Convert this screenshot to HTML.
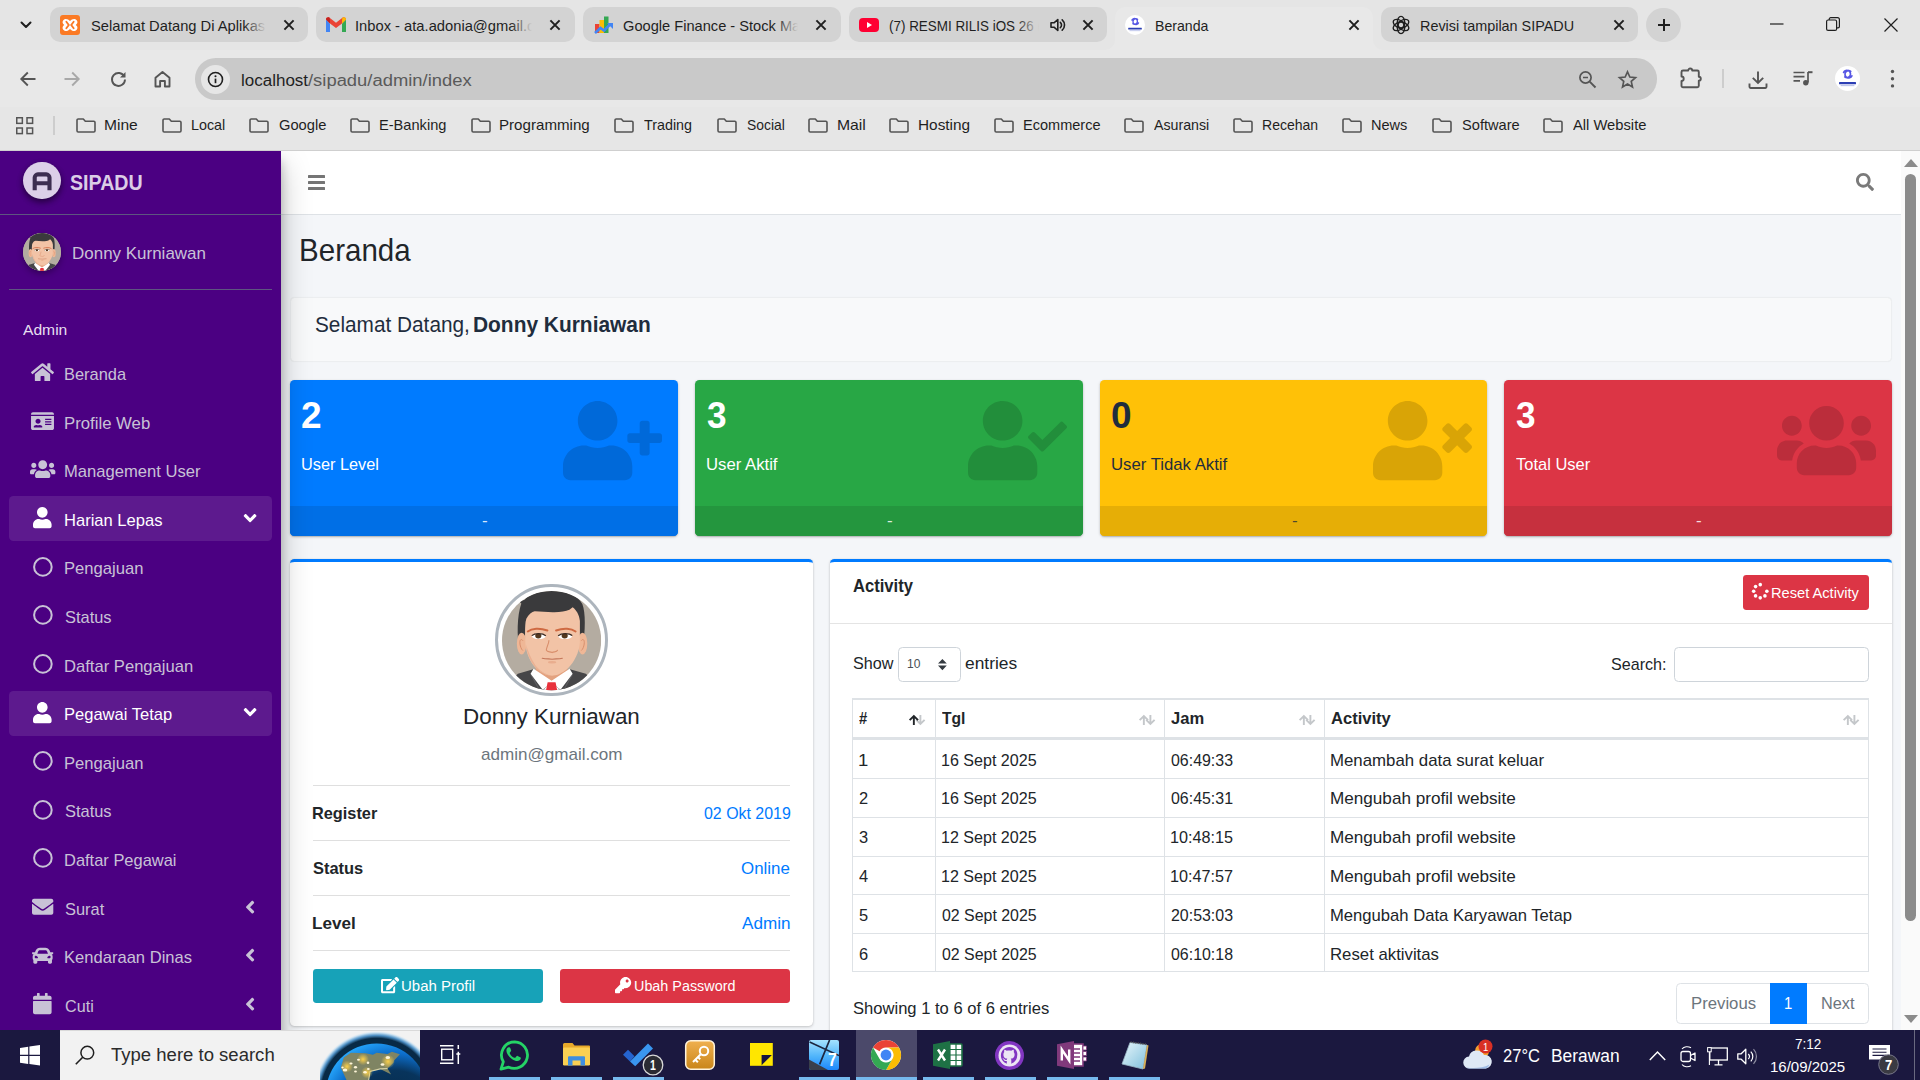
<!DOCTYPE html>
<html lang="id"><head><meta charset="utf-8"><title>Beranda</title>
<style>
html,body{margin:0;padding:0}
body{width:1920px;height:1080px;overflow:hidden;position:relative;background:#f4f6f9;font-family:"Liberation Sans",sans-serif}
body div,body svg,body span.t{position:absolute;box-sizing:border-box}
span.t{white-space:pre;line-height:1;transform-origin:0 0;display:block}
svg{overflow:visible}
div.g{left:0;top:0;width:0;height:0}
</style></head><body>
<div class="g" id="main-content">
<div style="left:281.25px;top:151px;width:1620px;height:879px;background:#f4f6f9;"></div>
<span class="t" style="left:298.57px;top:235px;font-size:30.62px;font-weight:400;color:#212529;transform:scaleX(0.9651);">Beranda</span>
<div style="left:290.25px;top:297px;width:1601.5px;height:64.5px;background:#f8f9fa;border-radius:4.500px;border:1px solid #eceef0;box-shadow:0 0 1px rgba(0,0,0,.06);"></div>
<span class="t" style="left:314.5px;top:315px;font-size:21.26px;font-weight:400;color:#1f2d3d;transform:scaleX(0.9784);">Selamat Datang,</span>
<span class="t" style="left:472.72px;top:315px;font-size:21.26px;font-weight:700;color:#1f2d3d;transform:scaleX(0.9840);">Donny Kurniawan</span>
<div style="left:290px;top:380px;width:388px;height:156px;background:#007bff;border-radius:4.500px;box-shadow:0 1px 1px rgba(0,0,0,.125),0 1px 3px rgba(0,0,0,.2);"></div>
<div style="left:290px;top:505.7px;width:388px;height:30.3px;background:#006fe6;border-radius:0 0 4.500px 4.500px;"></div>
<span class="t" style="left:301.41px;top:397px;font-size:37.42px;font-weight:700;color:#fff;transform:scaleX(0.9895);">2</span>
<span class="t" style="left:301.44px;top:456px;font-size:17.01px;font-weight:400;color:#fff;transform:scaleX(0.9587);">User Level</span>
<span class="t" style="left:482px;top:512px;font-size:17.01px;font-weight:400;color:rgba(255,255,255,.85);transform:scaleX(1.0000);">-</span>
<svg style="left:562.5px;top:400.6px;" width="99" height="79.2" viewBox="0 0 640 512"><path d="M224 256c70.700 0 128-57.300 128-128S294.700 0 224 0 96 57.300 96 128s57.300 128 128 128zm89.600 32h-16.700c-22.200 10.200-46.900 16-72.900 16s-50.600-5.800-72.900-16h-16.700C60.200 288 0 348.200 0 422.400V464c0 26.500 21.500 48 48 48h352c26.500 0 48-21.500 48-48v-41.600c0-74.200-60.200-134.400-134.400-134.400zM624 208h-64v-64c0-8.800-7.200-16-16-16h-32c-8.800 0-16 7.200-16 16v64h-64c-8.800 0-16 7.200-16 16v32c0 8.800 7.200 16 16 16h64v64c0 8.800 7.200 16 16 16h32c8.800 0 16-7.200 16-16v-64h64c8.800 0 16-7.200 16-16v-32c0-8.800-7.200-16-16-16z" fill="#0069d9"/></svg>
<div style="left:695px;top:380px;width:388px;height:156px;background:#28a745;border-radius:4.500px;box-shadow:0 1px 1px rgba(0,0,0,.125),0 1px 3px rgba(0,0,0,.2);"></div>
<div style="left:695px;top:505.7px;width:388px;height:30.3px;background:#24963e;border-radius:0 0 4.500px 4.500px;"></div>
<span class="t" style="left:707.4px;top:397px;font-size:37.42px;font-weight:700;color:#fff;transform:scaleX(0.9400);">3</span>
<span class="t" style="left:706.42px;top:456px;font-size:17.01px;font-weight:400;color:#fff;transform:scaleX(0.9828);">User Aktif</span>
<span class="t" style="left:887px;top:512px;font-size:17.01px;font-weight:400;color:rgba(255,255,255,.85);transform:scaleX(1.0000);">-</span>
<svg style="left:967.5px;top:400.6px;" width="99" height="79.2" viewBox="0 0 640 512"><path d="M224 256c70.700 0 128-57.300 128-128S294.700 0 224 0 96 57.300 96 128s57.300 128 128 128zm89.600 32h-16.700c-22.200 10.200-46.900 16-72.900 16s-50.600-5.800-72.900-16h-16.700C60.200 288 0 348.200 0 422.400V464c0 26.500 21.500 48 48 48h352c26.500 0 48-21.500 48-48v-41.600c0-74.200-60.200-134.400-134.400-134.400zM636.600 159.600l-22.600-22.800c-4.700-4.700-12.300-4.800-17-.1L480.700 252.900l-49.200-49.600c-4.700-4.700-12.300-4.800-17-.1l-22.800 22.600c-4.700 4.700-4.800 12.300-.1 17l80.100 80.700c4.700 4.700 12.300 4.800 17 .1l147.800-146.700c4.700-4.700 4.800-12.300.1-17z" fill="#228e3b"/></svg>
<div style="left:1100px;top:380px;width:387px;height:156px;background:#ffc107;border-radius:4.500px;box-shadow:0 1px 1px rgba(0,0,0,.125),0 1px 3px rgba(0,0,0,.2);"></div>
<div style="left:1100px;top:505.7px;width:387px;height:30.3px;background:#e6ae06;border-radius:0 0 4.500px 4.500px;"></div>
<span class="t" style="left:1111.41px;top:397px;font-size:37.42px;font-weight:700;color:#1f2d3d;transform:scaleX(0.9895);">0</span>
<span class="t" style="left:1111.42px;top:456px;font-size:17.01px;font-weight:400;color:#1f2d3d;transform:scaleX(0.9838);">User Tidak Aktif</span>
<span class="t" style="left:1292px;top:512px;font-size:17.01px;font-weight:400;color:rgba(31,45,61,.8);transform:scaleX(1.0000);">-</span>
<svg style="left:1372.5px;top:400.6px;" width="99" height="79.2" viewBox="0 0 640 512"><path d="M224 256c70.700 0 128-57.300 128-128S294.700 0 224 0 96 57.300 96 128s57.300 128 128 128zm89.600 32h-16.700c-22.200 10.200-46.900 16-72.900 16s-50.600-5.800-72.900-16h-16.700C60.200 288 0 348.200 0 422.400V464c0 26.500 21.500 48 48 48h352c26.500 0 48-21.500 48-48v-41.600c0-74.200-60.200-134.400-134.400-134.400zM589.600 240l45.600-45.600c6.300-6.300 6.300-16.500 0-22.800l-22.800-22.800c-6.300-6.300-16.500-6.300-22.800 0L544 194.400l-45.600-45.600c-6.300-6.300-16.500-6.300-22.800 0l-22.800 22.800c-6.300 6.300-6.300 16.500 0 22.800l45.600 45.600-45.600 45.600c-6.300 6.300-6.300 16.500 0 22.800l22.800 22.800c6.300 6.300 16.500 6.300 22.800 0l45.600-45.600 45.600 45.600c6.300 6.300 16.500 6.300 22.800 0l22.800-22.800c6.300-6.300 6.300-16.500 0-22.800L589.600 240z" fill="#d9a406"/></svg>
<div style="left:1504px;top:380px;width:388px;height:156px;background:#dc3545;border-radius:4.500px;box-shadow:0 1px 1px rgba(0,0,0,.125),0 1px 3px rgba(0,0,0,.2);"></div>
<div style="left:1504px;top:505.7px;width:388px;height:30.3px;background:#c6303e;border-radius:0 0 4.500px 4.500px;"></div>
<span class="t" style="left:1516.4px;top:397px;font-size:37.42px;font-weight:700;color:#fff;transform:scaleX(0.9400);">3</span>
<span class="t" style="left:1516.4px;top:456px;font-size:17.01px;font-weight:400;color:#fff;transform:scaleX(0.9693);">Total User</span>
<span class="t" style="left:1696px;top:512px;font-size:17.01px;font-weight:400;color:rgba(255,255,255,.85);transform:scaleX(1.0000);">-</span>
<svg style="left:1776.5px;top:400.6px;" width="99" height="79.2" viewBox="0 0 640 512"><path d="M96 224c35.300 0 64-28.700 64-64s-28.700-64-64-64-64 28.700-64 64 28.700 64 64 64zm448 0c35.300 0 64-28.700 64-64s-28.700-64-64-64-64 28.700-64 64 28.700 64 64 64zm32 32h-64c-17.600 0-33.500 7.100-45.100 18.600 40.300 22.100 68.900 62 75.100 109.400h66c17.700 0 32-14.300 32-32v-32c0-35.300-28.700-64-64-64zm-256 0c61.900 0 112-50.100 112-112S381.900 32 320 32 208 82.100 208 144s50.100 112 112 112zm76.800 32h-8.300c-20.800 10-43.900 16-68.500 16s-47.600-6-68.500-16h-8.300C179.600 288 128 339.600 128 403.200V432c0 26.500 21.500 48 48 48h288c26.500 0 48-21.500 48-48v-28.800c0-63.600-51.600-115.200-115.200-115.200zm-223.700-13.400C161.500 263.100 145.600 256 128 256H64c-35.300 0-64 28.700-64 64v32c0 17.700 14.300 32 32 32h65.900c6.300-47.400 34.900-87.300 75.200-109.400z" fill="#bb2d3b"/></svg>
<div style="left:290.25px;top:558.8px;width:522.75px;height:467.4px;background:#fff;border-radius:4.500px;border-top:3.400px solid #007bff;box-shadow:0 0 1px rgba(0,0,0,.125),0 1px 3px rgba(0,0,0,.2);"></div>
<div style="left:495.3px;top:583.8px;width:112.6px;height:112.6px;background:#fff;border-radius:50%;border:3.400px solid #adb5bd;"></div>
<svg style="left:502px;top:590.5px;" width="99.2" height="99.2" viewBox="0 0 100 100"><defs><clipPath id="avc2"><circle cx="50" cy="50" r="50"/></clipPath></defs><g clip-path="url(#avc2)"><rect width="100" height="100" fill="#b4aca1"/><path d="M8 104C10 92 13 86 16 83.500L31.500 79 50 91 68.500 79 84.500 83.500C88 86 91 93 93 104z" fill="#464648"/><path d="M29 84l9 16M71 84l-9 16" stroke="#5c5c5f" stroke-width="1.200"/><path d="M34 74v7l16 12 16-12v-7z" fill="#e3a27f"/><path d="M31.800 78.500L28.800 83.500 41 99.500 50 92.500 59 99.500 71.200 83.500 68.200 78.500 50 90.500z" fill="#fff"/><path d="M41 100l9-8 9 8z" fill="#fff"/><path d="M46 92h8l1.800 9h-11.600z" fill="#e8323c"/><path d="M17.500 60C15 45 15 25 19.500 12.500L17 10l5.500-1C28 3 38 0 50 0 64 0 76 4 81 13c3.500 9 3 27 .500 44L78 57V30H24l-1 30z" fill="#3a3a3c"/><ellipse cx="19.800" cy="53" rx="4.800" ry="11" fill="#efb796"/><ellipse cx="81.200" cy="53" rx="4.800" ry="11" fill="#efb796"/><path d="M21 50c-1.500-2-3-1-3 2s1.500 7 3 8M80 50c1.500-2 3-1 3 2s-1.500 7-3 8" stroke="#d98f6c" stroke-width="1" fill="none"/><path d="M23.500 50C23 40 23.500 32 24.500 28 27 23.500 30 21 33 20.500c6 .500 12 .800 18 1 7 .200 13-.800 17-2.500l3.200-2.700C75 19 78 24 78.500 30v22C78 62 72.500 72 67 77.500 60 84 54 85.500 50.500 85.500S41 84 34 77.500C28.500 72 24 62 23.500 52z" fill="#f2c3a6"/><path d="M24.200 54C25 63 29 72 34 77.500 41 84 47 85.500 50.500 85.500c-7-1.500-13-5.500-17-11C29 68 26 60 24.200 54z" fill="#eab193"/><path d="M26 40.800C30 37.600 38 37 45.800 39.800M54.500 39.800C62 37 70 37.600 74.200 40.800" stroke="#cf6a42" stroke-width="2" fill="none" stroke-linecap="round"/><ellipse cx="37.100" cy="45.600" rx="7" ry="2.900" fill="#fff"/><ellipse cx="63.700" cy="45.600" rx="7" ry="2.900" fill="#fff"/><ellipse cx="36.600" cy="45.200" rx="3.100" ry="2.700" fill="#54391f"/><ellipse cx="63.200" cy="45.200" rx="3.100" ry="2.700" fill="#54391f"/><path d="M30 45C33 42.300 41 42.300 44.200 45M56.600 45C60 42.300 68 42.300 70.800 45" stroke="#3b2a22" stroke-width="1.300" fill="none"/><path d="M47.300 50C47 54 44.300 57.500 44.800 59.800 45.800 62 48.500 60.800 50.500 62 52.500 60.800 55 62 56 59.800" stroke="#d98f6c" stroke-width="1.100" fill="none" stroke-linecap="round"/><path d="M40.600 67.800C45 68.800 48 68.200 50.500 68.800 53 68.200 57 68.800 60.800 67.800" stroke="#c4775a" stroke-width="1.200" fill="none" stroke-linecap="round"/><ellipse cx="50.500" cy="71.800" rx="4.200" ry="1.200" fill="#e9ad8e"/></g></svg>
<span class="t" style="left:463.3px;top:706px;font-size:22.3px;font-weight:400;color:#212529;transform:scaleX(1.0046);">Donny Kurniawan</span>
<span class="t" style="left:480.6px;top:746px;font-size:17.01px;font-weight:400;color:#6c757d;transform:scaleX(1.0038);">admin@gmail.com</span>
<div style="left:313px;top:785px;width:476.8px;height:1.1px;background:#dfdfdf;"></div>
<div style="left:313px;top:840px;width:476.8px;height:1.1px;background:#dfdfdf;"></div>
<div style="left:313px;top:895.2px;width:476.8px;height:1.1px;background:#dfdfdf;"></div>
<div style="left:313px;top:950.2px;width:476.8px;height:1.1px;background:#dfdfdf;"></div>
<span class="t" style="left:312.04px;top:805px;font-size:17.01px;font-weight:700;color:#212529;transform:scaleX(0.9598);">Register</span>
<span class="t" style="left:703.5px;top:805px;font-size:17.01px;font-weight:400;color:#007bff;transform:scaleX(0.9364);">02 Okt 2019</span>
<span class="t" style="left:313px;top:860px;font-size:17.01px;font-weight:700;color:#212529;transform:scaleX(0.9670);">Status</span>
<span class="t" style="left:741.4px;top:860px;font-size:17.01px;font-weight:400;color:#007bff;transform:scaleX(0.9941);">Online</span>
<span class="t" style="left:311.99px;top:915px;font-size:17.01px;font-weight:700;color:#212529;transform:scaleX(1.0060);">Level</span>
<span class="t" style="left:741.7px;top:915px;font-size:17.01px;font-weight:400;color:#007bff;transform:scaleX(1.0077);">Admin</span>
<div style="left:313px;top:969.2px;width:229.8px;height:33.5px;background:#17a2b8;border-radius:3.400px;"></div>
<svg style="left:380.6px;top:976.6px;" width="18.2" height="16.2" viewBox="0 0 576 512"><path d="M402.600 83.200l90.200 90.200c3.800 3.800 3.800 10 0 13.800L274.400 405.600l-92.800 10.300c-12.400 1.400-22.900-9.100-21.500-21.500l10.300-92.800L388.800 83.200c3.800-3.800 10-3.800 13.800 0zm162-22.900l-48.800-48.800c-15.200-15.200-39.900-15.200-55.200 0l-35.400 35.400c-3.800 3.800-3.800 10 0 13.800l90.200 90.200c3.800 3.800 10 3.800 13.800 0l35.400-35.400c15.200-15.300 15.200-40 0-55.200zM384 346.200V448H64V128h229.800c3.200 0 6.200-1.300 8.500-3.500l40-40c7.600-7.600 2.200-20.500-8.500-20.500H48C21.500 64 0 85.500 0 112v352c0 26.500 21.500 48 48 48h352c26.500 0 48-21.500 48-48V306.200c0-10.700-12.900-16-20.500-8.500l-40 40c-2.200 2.300-3.500 5.300-3.500 8.500z" fill="#fff"/></svg>
<span class="t" style="left:401.29px;top:979px;font-size:14.88px;font-weight:400;color:#fff;transform:scaleX(1.0072);">Ubah Profil</span>
<div style="left:560px;top:969.2px;width:229.8px;height:33.5px;background:#dc3545;border-radius:3.400px;"></div>
<svg style="left:614.5px;top:977px;" width="16.2" height="16.2" viewBox="0 0 512 512"><path d="M512 176.001C512 273.203 433.202 352 336 352c-11.220 0-22.190-1.062-32.827-3.069l-24.012 27.014A23.999 23.999 0 0 1 261.223 384H224v40c0 13.255-10.745 24-24 24h-40v40c0 13.255-10.745 24-24 24H24c-13.255 0-24-10.745-24-24v-78.059c0-6.365 2.529-12.470 7.029-16.971l161.802-161.802C163.108 213.814 160 195.271 160 176 160 78.798 238.797.001 335.999 0 433.488-.001 512 78.511 512 176.001zM336 128c0 26.510 21.490 48 48 48s48-21.490 48-48-21.490-48-48-48-48 21.490-48 48z" fill="#fff"/></svg>
<span class="t" style="left:633.83px;top:979px;font-size:14.88px;font-weight:400;color:#fff;transform:scaleX(0.9660);">Ubah Password</span>
<div style="left:829.6px;top:558.8px;width:1062.4px;height:480px;background:#fff;border-radius:4.500px 4.500px 0 0;border-top:3.400px solid #007bff;box-shadow:0 0 1px rgba(0,0,0,.125),0 1px 3px rgba(0,0,0,.2);"></div>
<span class="t" style="left:852.5px;top:577px;font-size:18.71px;font-weight:700;color:#212529;transform:scaleX(0.8882);">Activity</span>
<div style="left:1743px;top:575px;width:126px;height:35px;background:#dc3545;border-radius:3.400px;"></div>
<svg style="left:1752.15px;top:583.45px;" width="16.5" height="16.5" viewBox="0 0 16.500 16.500"><circle cx="8.25" cy="1.65" r="1.800" fill="#fff"/><circle cx="14.85" cy="8.25" r="1.800" fill="#fff"/><circle cx="12.92" cy="12.92" r="1.800" fill="#fff"/><circle cx="8.25" cy="14.85" r="1.800" fill="#fff"/><circle cx="3.58" cy="12.92" r="1.800" fill="#fff"/><circle cx="1.65" cy="8.25" r="1.800" fill="#fff"/><circle cx="3.58" cy="3.58" r="1.800" fill="#fff"/></svg>
<span class="t" style="left:1771.02px;top:586px;font-size:14.88px;font-weight:400;color:#fff;transform:scaleX(0.9848);">Reset Activity</span>
<div style="left:829.6px;top:622.7px;width:1062.4px;height:1.1px;background:#e4e4e4;"></div>
<span class="t" style="left:852.7px;top:655px;font-size:17.01px;font-weight:400;color:#212529;transform:scaleX(0.9503);">Show</span>
<div style="left:898.2px;top:647px;width:62.4px;height:34.6px;background:#fff;border:1.100px solid #ced4da;border-radius:4.500px;"></div>
<span class="t" style="left:907.49px;top:657px;font-size:13.2px;font-weight:400;color:#495057;transform:scaleX(0.9149);">10</span>
<svg style="left:938px;top:658.8px;" width="8.8" height="11.2" viewBox="0 0 8.800 11.200"><path d="M0 4.600L4.400 0l4.400 4.600zM0 6.600l4.400 4.600 4.400-4.600z" fill="#343a40"/></svg>
<span class="t" style="left:965.2px;top:655px;font-size:17.01px;font-weight:400;color:#212529;transform:scaleX(1.0213);">entries</span>
<span class="t" style="left:1611.2px;top:656px;font-size:17.01px;font-weight:400;color:#212529;transform:scaleX(0.9471);">Search:</span>
<div style="left:1674.2px;top:647px;width:194.6px;height:34.6px;background:#fff;border:1.100px solid #ced4da;border-radius:4.500px;"></div>
<div style="left:852px;top:698.7px;width:1017px;height:273.5px;background:#fff;border:1.100px solid #dee2e6;"></div>
<div style="left:852px;top:698px;width:1017px;height:2.2px;background:#dee2e6;"></div>
<div style="left:852px;top:737px;width:1017px;height:2.6px;background:#dee2e6;"></div>
<div style="left:852px;top:778.05px;width:1017px;height:1.1px;background:#dee2e6;"></div>
<div style="left:852px;top:816.85px;width:1017px;height:1.1px;background:#dee2e6;"></div>
<div style="left:852px;top:855.65px;width:1017px;height:1.1px;background:#dee2e6;"></div>
<div style="left:852px;top:894.35px;width:1017px;height:1.1px;background:#dee2e6;"></div>
<div style="left:852px;top:933.05px;width:1017px;height:1.1px;background:#dee2e6;"></div>
<div style="left:934.65px;top:698.7px;width:1.1px;height:273.5px;background:#dee2e6;"></div>
<div style="left:1163.85px;top:698.7px;width:1.1px;height:273.5px;background:#dee2e6;"></div>
<div style="left:1323.85px;top:698.7px;width:1.1px;height:273.5px;background:#dee2e6;"></div>
<span class="t" style="left:859.4px;top:710px;font-size:17.01px;font-weight:700;color:#212529;transform:scaleX(0.8700);">#</span>
<span class="t" style="left:941.6px;top:710px;font-size:17.01px;font-weight:700;color:#212529;transform:scaleX(0.9205);">Tgl</span>
<span class="t" style="left:1171.4px;top:710px;font-size:17.01px;font-weight:700;color:#212529;transform:scaleX(0.9732);">Jam</span>
<span class="t" style="left:1331px;top:710px;font-size:17.01px;font-weight:700;color:#212529;transform:scaleX(0.9733);">Activity</span>
<svg style="left:909px;top:715.4px;" width="16" height="10" viewBox="0 0 16 10"><path d="M11.400 0V8.800M7.200 4.800l4.200 4.200 4.200-4.200" fill="none" stroke="#c4c7ca" stroke-width="1.900"/><path d="M4.850 10V1.200M.650 5.200l4.200-4.200 4.200 4.200" fill="none" stroke="#212529" stroke-width="1.900"/></svg>
<svg style="left:1138.8px;top:715.4px;" width="16" height="10" viewBox="0 0 16 10"><path d="M11.400 0V8.800M7.200 4.800l4.200 4.200 4.200-4.200" fill="none" stroke="#c4c7ca" stroke-width="1.900"/><path d="M4.850 10V1.200M.650 5.200l4.200-4.200 4.200 4.200" fill="none" stroke="#c4c7ca" stroke-width="1.900"/></svg>
<svg style="left:1298.5px;top:715.4px;" width="16" height="10" viewBox="0 0 16 10"><path d="M11.400 0V8.800M7.200 4.800l4.200 4.200 4.200-4.200" fill="none" stroke="#c4c7ca" stroke-width="1.900"/><path d="M4.850 10V1.200M.650 5.200l4.200-4.200 4.200 4.200" fill="none" stroke="#c4c7ca" stroke-width="1.900"/></svg>
<svg style="left:1843px;top:715.4px;" width="16" height="10" viewBox="0 0 16 10"><path d="M11.400 0V8.800M7.200 4.800l4.200 4.200 4.200-4.200" fill="none" stroke="#c4c7ca" stroke-width="1.900"/><path d="M4.850 10V1.200M.650 5.200l4.200-4.200 4.200 4.200" fill="none" stroke="#c4c7ca" stroke-width="1.900"/></svg>
<span class="t" style="left:858.31px;top:752px;font-size:17.01px;font-weight:400;color:#212529;transform:scaleX(1.0875);">1</span>
<span class="t" style="left:940.66px;top:752px;font-size:17.01px;font-weight:400;color:#212529;transform:scaleX(0.9449);">16 Sept 2025</span>
<span class="t" style="left:1171.4px;top:752px;font-size:17.01px;font-weight:400;color:#212529;transform:scaleX(0.9373);">06:49:33</span>
<span class="t" style="left:1330.01px;top:752px;font-size:17.01px;font-weight:400;color:#212529;transform:scaleX(0.9892);">Menambah data surat keluar</span>
<span class="t" style="left:859.4px;top:790px;font-size:17.01px;font-weight:400;color:#212529;transform:scaleX(0.9667);">2</span>
<span class="t" style="left:940.66px;top:790px;font-size:17.01px;font-weight:400;color:#212529;transform:scaleX(0.9449);">16 Sept 2025</span>
<span class="t" style="left:1171.4px;top:790px;font-size:17.01px;font-weight:400;color:#212529;transform:scaleX(0.9373);">06:45:31</span>
<span class="t" style="left:1329.99px;top:790px;font-size:17.01px;font-weight:400;color:#212529;transform:scaleX(1.0075);">Mengubah profil website</span>
<span class="t" style="left:859.4px;top:829px;font-size:17.01px;font-weight:400;color:#212529;transform:scaleX(0.9667);">3</span>
<span class="t" style="left:940.66px;top:829px;font-size:17.01px;font-weight:400;color:#212529;transform:scaleX(0.9449);">12 Sept 2025</span>
<span class="t" style="left:1170.45px;top:829px;font-size:17.01px;font-weight:400;color:#212529;transform:scaleX(0.9518);">10:48:15</span>
<span class="t" style="left:1329.99px;top:829px;font-size:17.01px;font-weight:400;color:#212529;transform:scaleX(1.0075);">Mengubah profil website</span>
<span class="t" style="left:859.4px;top:868px;font-size:17.01px;font-weight:400;color:#212529;transform:scaleX(0.9667);">4</span>
<span class="t" style="left:940.66px;top:868px;font-size:17.01px;font-weight:400;color:#212529;transform:scaleX(0.9449);">12 Sept 2025</span>
<span class="t" style="left:1170.45px;top:868px;font-size:17.01px;font-weight:400;color:#212529;transform:scaleX(0.9518);">10:47:57</span>
<span class="t" style="left:1329.99px;top:868px;font-size:17.01px;font-weight:400;color:#212529;transform:scaleX(1.0075);">Mengubah profil website</span>
<span class="t" style="left:859.4px;top:907px;font-size:17.01px;font-weight:400;color:#212529;transform:scaleX(0.9667);">5</span>
<span class="t" style="left:941.6px;top:907px;font-size:17.01px;font-weight:400;color:#212529;transform:scaleX(0.9355);">02 Sept 2025</span>
<span class="t" style="left:1171.4px;top:907px;font-size:17.01px;font-weight:400;color:#212529;transform:scaleX(0.9373);">20:53:03</span>
<span class="t" style="left:1330.02px;top:907px;font-size:17.01px;font-weight:400;color:#212529;transform:scaleX(0.9783);">Mengubah Data Karyawan Tetap</span>
<span class="t" style="left:859.4px;top:946px;font-size:17.01px;font-weight:400;color:#212529;transform:scaleX(0.9667);">6</span>
<span class="t" style="left:941.6px;top:946px;font-size:17.01px;font-weight:400;color:#212529;transform:scaleX(0.9355);">02 Sept 2025</span>
<span class="t" style="left:1171.4px;top:946px;font-size:17.01px;font-weight:400;color:#212529;transform:scaleX(0.9373);">06:10:18</span>
<span class="t" style="left:1330.01px;top:946px;font-size:17.01px;font-weight:400;color:#212529;transform:scaleX(0.9859);">Reset aktivitas</span>
<span class="t" style="left:852.8px;top:1000px;font-size:17.01px;font-weight:400;color:#212529;transform:scaleX(0.9751);">Showing 1 to 6 of 6 entries</span>
<div style="left:1676.3px;top:982.5px;width:192.3px;height:41.2px;background:#fff;border:1.100px solid #dee2e6;border-radius:4.500px;"></div>
<div style="left:1770.2px;top:982.5px;width:36.8px;height:41.2px;background:#007bff;"></div>
<span class="t" style="left:1690.92px;top:995px;font-size:17.01px;font-weight:400;color:#6c757d;transform:scaleX(0.9839);">Previous</span>
<span class="t" style="left:1784.12px;top:995px;font-size:17.01px;font-weight:400;color:#fff;transform:scaleX(0.8750);">1</span>
<span class="t" style="left:1820.64px;top:995px;font-size:17.01px;font-weight:400;color:#6c757d;transform:scaleX(0.9582);">Next</span>
</div>
<div class="g" id="top-navbar">
<div style="left:281.25px;top:151px;width:1619.75px;height:62.8px;background:#fff;"></div>
<div style="left:281.25px;top:213.5px;width:1619.75px;height:1.1px;background:#dee2e6;"></div>
<div style="left:308px;top:175.2px;width:16.5px;height:2.6px;background:#757575;border-radius:.5px;"></div>
<div style="left:308px;top:181.1px;width:16.5px;height:2.6px;background:#757575;border-radius:.5px;"></div>
<div style="left:308px;top:187px;width:16.5px;height:2.6px;background:#757575;border-radius:.5px;"></div>
<svg style="left:1856px;top:173px;" width="18" height="18" viewBox="0 0 512 512"><path d="M505 442.700L405.300 343c-4.500-4.500-10.600-7-17-7H372c27.600-35.300 44-79.700 44-128C416 93.100 322.900 0 208 0S0 93.100 0 208s93.100 208 208 208c48.300 0 92.700-16.400 128-44v16.300c0 6.400 2.500 12.500 7 17l99.700 99.700c9.400 9.400 24.600 9.400 33.900 0l28.300-28.300c9.400-9.400 9.400-24.600.1-34zM208 336c-70.700 0-128-57.200-128-128 0-70.700 57.200-128 128-128 70.700 0 128 57.200 128 128 0 70.700-57.200 128-128 128z" fill="#7a7a7a"/></svg>
<div style="left:1901px;top:151px;width:19px;height:879px;background:#fafafa;"></div>
<svg style="left:1903.5px;top:158.5px;" width="14" height="8" viewBox="0 0 14 8"><path d="M0 8L7 0l7 8z" fill="#8b8b8b"/></svg>
<svg style="left:1903.5px;top:1014.5px;" width="14" height="8" viewBox="0 0 14 8"><path d="M0 0L7 8l7-8z" fill="#8b8b8b"/></svg>
<div style="left:1905px;top:173.8px;width:11px;height:747px;background:#8b8b8b;border-radius:5.500px;"></div>
</div>
<div class="g" id="main-sidebar">
<div style="left:0px;top:151px;width:281.25px;height:930px;background:#4b0082;box-shadow:0 14px 28px rgba(0,0,0,.25),0 10px 10px rgba(0,0,0,.22);"></div>
<div style="left:23px;top:161.5px;width:37.5px;height:37.5px;background:#dccfe8;border-radius:50%;box-shadow:0 3px 6px rgba(0,0,0,.28),0 3px 6px rgba(0,0,0,.3);"></div>
<svg style="left:23px;top:161.5px;" width="37.5" height="37.5" viewBox="0 0 37.500 37.500"><path d="M11.700 28.300V15.600a3.200 3.200 0 0 1 3.200-3.200h8.400a3.200 3.200 0 0 1 3.200 3.200V28.300M11.700 21.300h14.800" fill="none" stroke="#3d2d50" stroke-width="4.100"/></svg>
<span class="t" style="left:70px;top:172px;font-size:21.8px;font-weight:700;color:#dbcde6;transform:scaleX(0.9000);">SIPADU</span>
<div style="left:0px;top:213.5px;width:281.25px;height:1.2px;background:#5d5680;"></div>
<div style="left:23px;top:232.5px;width:38px;height:38px;background:#b7ada1;border-radius:50%;box-shadow:0 3px 6px rgba(0,0,0,.3);"></div>
<svg style="left:23px;top:232.5px;" width="38" height="38" viewBox="0 0 100 100"><defs><clipPath id="avc1"><circle cx="50" cy="50" r="50"/></clipPath></defs><g clip-path="url(#avc1)"><rect width="100" height="100" fill="#b4aca1"/><path d="M8 104C10 92 13 86 16 83.500L31.500 79 50 91 68.500 79 84.500 83.500C88 86 91 93 93 104z" fill="#464648"/><path d="M29 84l9 16M71 84l-9 16" stroke="#5c5c5f" stroke-width="1.200"/><path d="M34 74v7l16 12 16-12v-7z" fill="#e3a27f"/><path d="M31.800 78.500L28.800 83.500 41 99.500 50 92.500 59 99.500 71.200 83.500 68.200 78.500 50 90.500z" fill="#fff"/><path d="M41 100l9-8 9 8z" fill="#fff"/><path d="M46 92h8l1.800 9h-11.600z" fill="#e8323c"/><path d="M17.500 60C15 45 15 25 19.500 12.500L17 10l5.500-1C28 3 38 0 50 0 64 0 76 4 81 13c3.500 9 3 27 .500 44L78 57V30H24l-1 30z" fill="#3a3a3c"/><ellipse cx="19.800" cy="53" rx="4.800" ry="11" fill="#efb796"/><ellipse cx="81.200" cy="53" rx="4.800" ry="11" fill="#efb796"/><path d="M21 50c-1.500-2-3-1-3 2s1.500 7 3 8M80 50c1.500-2 3-1 3 2s-1.500 7-3 8" stroke="#d98f6c" stroke-width="1" fill="none"/><path d="M23.500 50C23 40 23.500 32 24.500 28 27 23.500 30 21 33 20.500c6 .500 12 .800 18 1 7 .200 13-.800 17-2.500l3.200-2.700C75 19 78 24 78.500 30v22C78 62 72.500 72 67 77.500 60 84 54 85.500 50.500 85.500S41 84 34 77.500C28.500 72 24 62 23.500 52z" fill="#f2c3a6"/><path d="M24.200 54C25 63 29 72 34 77.500 41 84 47 85.500 50.500 85.500c-7-1.500-13-5.500-17-11C29 68 26 60 24.200 54z" fill="#eab193"/><path d="M26 40.800C30 37.600 38 37 45.800 39.800M54.500 39.800C62 37 70 37.600 74.200 40.800" stroke="#cf6a42" stroke-width="2" fill="none" stroke-linecap="round"/><ellipse cx="37.100" cy="45.600" rx="7" ry="2.900" fill="#fff"/><ellipse cx="63.700" cy="45.600" rx="7" ry="2.900" fill="#fff"/><ellipse cx="36.600" cy="45.200" rx="3.100" ry="2.700" fill="#54391f"/><ellipse cx="63.200" cy="45.200" rx="3.100" ry="2.700" fill="#54391f"/><path d="M30 45C33 42.300 41 42.300 44.200 45M56.600 45C60 42.300 68 42.300 70.800 45" stroke="#3b2a22" stroke-width="1.300" fill="none"/><path d="M47.300 50C47 54 44.300 57.500 44.800 59.800 45.800 62 48.500 60.800 50.500 62 52.500 60.800 55 62 56 59.800" stroke="#d98f6c" stroke-width="1.100" fill="none" stroke-linecap="round"/><path d="M40.600 67.800C45 68.800 48 68.200 50.500 68.800 53 68.200 57 68.800 60.800 67.800" stroke="#c4775a" stroke-width="1.200" fill="none" stroke-linecap="round"/><ellipse cx="50.500" cy="71.800" rx="4.200" ry="1.200" fill="#e9ad8e"/></g></svg>
<span class="t" style="left:72.3px;top:245px;font-size:17.01px;font-weight:400;color:#c8c2d6;transform:scaleX(0.9982);">Donny Kurniawan</span>
<div style="left:9px;top:288.8px;width:263px;height:1.2px;background:#5d5680;"></div>
<span class="t" style="left:22.5px;top:322px;font-size:15.31px;font-weight:400;color:#e6dff0;transform:scaleX(1.0221);">Admin</span>
<svg style="left:31.2px;top:362.1px;" width="23" height="20.4" viewBox="0 0 576 512"><path d="M280.370 148.260L96 300.110V464a16 16 0 0 0 16 16l112.060-.29a16 16 0 0 0 15.920-16V368a16 16 0 0 1 16-16h64a16 16 0 0 1 16 16v95.640a16 16 0 0 0 16 16.050L464 480a16 16 0 0 0 16-16V300L295.670 148.260a12.190 12.190 0 0 0-15.300 0zM571.600 251.470L488 182.560V44.050a12 12 0 0 0-12-12h-56a12 12 0 0 0-12 12v72.610L318.470 43a48 48 0 0 0-61 0L4.340 251.470a12 12 0 0 0-1.600 16.900l25.500 31A12 12 0 0 0 45.150 301l235.220-193.740a12.190 12.190 0 0 1 15.300 0L530.900 301a12 12 0 0 0 16.900-1.600l25.500-31a12 12 0 0 0-1.700-16.930z" fill="#c8c2d6"/></svg>
<span class="t" style="left:63.73px;top:366px;font-size:17.01px;font-weight:400;color:#c8c2d6;transform:scaleX(0.9652);">Beranda</span>
<svg style="left:31.2px;top:410.7px;" width="23" height="20.4" viewBox="0 0 576 512"><path d="M528 32H48C21.500 32 0 53.500 0 80v16h576V80c0-26.500-21.500-48-48-48zM0 432c0 26.500 21.500 48 48 48h480c26.500 0 48-21.500 48-48V128H0v304zm352-232c0-4.400 3.600-8 8-8h144c4.400 0 8 3.600 8 8v16c0 4.400-3.600 8-8 8H360c-4.400 0-8-3.600-8-8v-16zm0 64c0-4.400 3.600-8 8-8h144c4.400 0 8 3.600 8 8v16c0 4.400-3.600 8-8 8H360c-4.400 0-8-3.600-8-8v-16zm0 64c0-4.400 3.600-8 8-8h144c4.400 0 8 3.600 8 8v16c0 4.400-3.600 8-8 8H360c-4.400 0-8-3.600-8-8v-16zM176 192c35.300 0 64 28.700 64 64s-28.700 64-64 64-64-28.700-64-64 28.700-64 64-64zM67.100 396.200C75.500 370.500 99.600 352 128 352h8.200c12.300 5.100 25.700 8 39.800 8s27.600-2.900 39.800-8h8.200c28.400 0 52.500 18.500 60.900 44.200 3.200 9.900-5.200 19.800-15.600 19.800H82.700c-10.400 0-18.800-10-15.600-19.800z" fill="#c8c2d6"/></svg>
<span class="t" style="left:63.72px;top:415px;font-size:17.01px;font-weight:400;color:#c8c2d6;transform:scaleX(0.9849);">Profile Web</span>
<svg style="left:30px;top:459.3px;" width="25.4" height="20.4" viewBox="0 0 640 512"><path d="M96 224c35.300 0 64-28.700 64-64s-28.700-64-64-64-64 28.700-64 64 28.700 64 64 64zm448 0c35.300 0 64-28.700 64-64s-28.700-64-64-64-64 28.700-64 64 28.700 64 64 64zm32 32h-64c-17.600 0-33.500 7.100-45.100 18.600 40.300 22.100 68.900 62 75.100 109.400h66c17.700 0 32-14.300 32-32v-32c0-35.300-28.700-64-64-64zm-256 0c61.900 0 112-50.100 112-112S381.900 32 320 32 208 82.100 208 144s50.100 112 112 112zm76.800 32h-8.300c-20.800 10-43.900 16-68.500 16s-47.600-6-68.500-16h-8.300C179.600 288 128 339.600 128 403.200V432c0 26.500 21.500 48 48 48h288c26.500 0 48-21.500 48-48v-28.800c0-63.600-51.600-115.200-115.200-115.200zm-223.700-13.400C161.500 263.100 145.600 256 128 256H64c-35.300 0-64 28.700-64 64v32c0 17.700 14.300 32 32 32h65.900c6.300-47.400 34.900-87.300 75.200-109.400z" fill="#c8c2d6"/></svg>
<span class="t" style="left:63.72px;top:463px;font-size:17.01px;font-weight:400;color:#c8c2d6;transform:scaleX(0.9757);">Management User</span>
<div style="left:9px;top:496.4px;width:263px;height:44.9px;background:rgba(255,255,255,.1);border-radius:4.500px;"></div>
<svg style="left:33.4px;top:507.3px;" width="18.6" height="21.3" viewBox="0 0 448 512"><path d="M224 256c70.700 0 128-57.300 128-128S294.700 0 224 0 96 57.300 96 128s57.300 128 128 128zm89.600 32h-16.700c-22.200 10.200-46.900 16-72.900 16s-50.600-5.800-72.900-16h-16.700C60.200 288 0 348.200 0 422.400V464c0 26.500 21.500 48 48 48h352c26.500 0 48-21.500 48-48v-41.600c0-74.200-60.200-134.400-134.400-134.400z" fill="#fff"/></svg>
<span class="t" style="left:63.73px;top:512px;font-size:17.01px;font-weight:400;color:#fff;transform:scaleX(0.9737);">Harian Lepas</span>
<svg style="left:245.2px;top:507.9px;" width="10.2" height="20.4" viewBox="0 0 256 512"><path d="M31.700 239l136-136c9.400-9.400 24.600-9.400 33.900 0l22.600 22.600c9.400 9.400 9.400 24.600 0 33.900L127.900 256l96.400 96.400c9.400 9.400 9.400 24.600 0 33.900L201.700 409c-9.400 9.400-24.600 9.400-33.900 0l-136-136c-9.500-9.400-9.500-24.600-.1-34z" fill="#fff" transform="rotate(-90 128.0 256.0)"/></svg>
<svg style="left:32.6px;top:556.8px;" width="19.8" height="19.8" viewBox="0 0 19.800 19.800"><circle cx="9.900" cy="9.900" r="8.800" fill="none" stroke="#c8c2d6" stroke-width="2"/></svg>
<span class="t" style="left:63.72px;top:560px;font-size:17.01px;font-weight:400;color:#c8c2d6;transform:scaleX(0.9782);">Pengajuan</span>
<svg style="left:32.6px;top:605.4px;" width="19.8" height="19.8" viewBox="0 0 19.800 19.800"><circle cx="9.900" cy="9.900" r="8.800" fill="none" stroke="#c8c2d6" stroke-width="2"/></svg>
<span class="t" style="left:64.7px;top:609px;font-size:17.01px;font-weight:400;color:#c8c2d6;transform:scaleX(0.9666);">Status</span>
<svg style="left:32.6px;top:654px;" width="19.8" height="19.8" viewBox="0 0 19.800 19.800"><circle cx="9.900" cy="9.900" r="8.800" fill="none" stroke="#c8c2d6" stroke-width="2"/></svg>
<span class="t" style="left:63.72px;top:658px;font-size:17.01px;font-weight:400;color:#c8c2d6;transform:scaleX(0.9766);">Daftar Pengajuan</span>
<div style="left:9px;top:690.8px;width:263px;height:44.9px;background:rgba(255,255,255,.1);border-radius:4.500px;"></div>
<svg style="left:33.4px;top:701.7px;" width="18.6" height="21.3" viewBox="0 0 448 512"><path d="M224 256c70.700 0 128-57.300 128-128S294.700 0 224 0 96 57.300 96 128s57.300 128 128 128zm89.600 32h-16.700c-22.200 10.200-46.900 16-72.900 16s-50.600-5.800-72.900-16h-16.700C60.200 288 0 348.200 0 422.400V464c0 26.500 21.500 48 48 48h352c26.500 0 48-21.500 48-48v-41.600c0-74.200-60.200-134.400-134.400-134.400z" fill="#fff"/></svg>
<span class="t" style="left:63.73px;top:706px;font-size:17.01px;font-weight:400;color:#fff;transform:scaleX(0.9722);">Pegawai Tetap</span>
<svg style="left:245.2px;top:702.3px;" width="10.2" height="20.4" viewBox="0 0 256 512"><path d="M31.700 239l136-136c9.400-9.400 24.600-9.400 33.900 0l22.600 22.600c9.400 9.400 9.400 24.600 0 33.900L127.900 256l96.400 96.400c9.400 9.400 9.400 24.600 0 33.900L201.700 409c-9.400 9.400-24.600 9.400-33.900 0l-136-136c-9.500-9.400-9.500-24.600-.1-34z" fill="#fff" transform="rotate(-90 128.0 256.0)"/></svg>
<svg style="left:32.6px;top:751.2px;" width="19.8" height="19.8" viewBox="0 0 19.800 19.800"><circle cx="9.900" cy="9.900" r="8.800" fill="none" stroke="#c8c2d6" stroke-width="2"/></svg>
<span class="t" style="left:63.72px;top:755px;font-size:17.01px;font-weight:400;color:#c8c2d6;transform:scaleX(0.9782);">Pengajuan</span>
<svg style="left:32.6px;top:799.8px;" width="19.8" height="19.8" viewBox="0 0 19.800 19.800"><circle cx="9.900" cy="9.900" r="8.800" fill="none" stroke="#c8c2d6" stroke-width="2"/></svg>
<span class="t" style="left:64.7px;top:803px;font-size:17.01px;font-weight:400;color:#c8c2d6;transform:scaleX(0.9666);">Status</span>
<svg style="left:32.6px;top:848.4px;" width="19.8" height="19.8" viewBox="0 0 19.800 19.800"><circle cx="9.900" cy="9.900" r="8.800" fill="none" stroke="#c8c2d6" stroke-width="2"/></svg>
<span class="t" style="left:63.73px;top:852px;font-size:17.01px;font-weight:400;color:#c8c2d6;transform:scaleX(0.9681);">Daftar Pegawai</span>
<svg style="left:32px;top:896.4px;" width="21.3" height="21.3" viewBox="0 0 512 512"><path d="M502.300 190.800c3.900-3.100 9.700-.2 9.700 4.700V400c0 26.500-21.500 48-48 48H48c-26.500 0-48-21.500-48-48V195.600c0-5 5.700-7.800 9.700-4.700 22.400 17.400 52.100 39.500 154.100 113.600 21.100 15.400 56.700 47.800 92.200 47.600 35.700.3 72-32.800 92.300-47.600 102-74.100 131.600-96.300 154-113.700zM256 320c23.200.4 56.600-29.200 73.400-41.400 132.700-96.300 142.800-104.700 173.400-128.700 5.800-4.500 9.200-11.500 9.200-18.900v-19c0-26.500-21.500-48-48-48H48C21.500 64 0 85.500 0 112v19c0 7.400 3.400 14.300 9.200 18.900 30.600 23.900 40.700 32.400 173.400 128.700 16.800 12.200 50.200 41.800 73.400 41.400z" fill="#c8c2d6"/></svg>
<span class="t" style="left:64.7px;top:901px;font-size:17.01px;font-weight:400;color:#c8c2d6;transform:scaleX(0.9656);">Surat</span>
<svg style="left:245.2px;top:896.7px;" width="10.2" height="20.4" viewBox="0 0 256 512"><path d="M31.700 239l136-136c9.400-9.400 24.600-9.400 33.900 0l22.600 22.600c9.400 9.400 9.400 24.600 0 33.900L127.900 256l96.400 96.400c9.400 9.400 9.400 24.600 0 33.900L201.700 409c-9.400 9.400-24.600 9.400-33.900 0l-136-136c-9.500-9.400-9.500-24.600-.1-34z" fill="#c8c2d6"/></svg>
<svg style="left:32px;top:945px;" width="21.3" height="21.3" viewBox="0 0 512 512"><path d="M499.990 176h-59.870l-16.640-41.600C406.380 91.630 365.570 64 319.500 64h-127c-46.060 0-86.880 27.630-103.990 70.400L71.870 176H12.010C4.200 176-1.530 183.340.37 190.910l6 24C7.700 220.250 12.500 224 18.010 224h20.070C24.650 235.730 16 252.780 16 272v48c0 16.120 6.160 30.670 16 41.930V416c0 17.670 14.330 32 32 32h32c17.670 0 32-14.330 32-32v-32h256v32c0 17.670 14.330 32 32 32h32c17.670 0 32-14.330 32-32v-54.070c9.840-11.250 16-25.800 16-41.930v-48c0-19.220-8.650-36.270-22.070-48H494c5.510 0 10.310-3.750 11.640-9.090l6-24c1.890-7.570-3.840-14.910-11.650-14.910zm-352.060-17.830c7.290-18.220 24.940-30.170 44.570-30.170h127c19.630 0 37.280 11.950 44.570 30.170L384 208H128l19.930-49.830zM96 319.800c-19.200 0-32-12.760-32-31.900S76.800 256 96 256s48 28.710 48 47.850-28.800 15.950-48 15.950zm320 0c-19.200 0-48 3.190-48-15.950S396.800 256 416 256s32 12.760 32 31.900-12.800 31.900-32 31.900z" fill="#c8c2d6"/></svg>
<span class="t" style="left:63.73px;top:949px;font-size:17.01px;font-weight:400;color:#c8c2d6;transform:scaleX(0.9748);">Kendaraan Dinas</span>
<svg style="left:245.2px;top:945.3px;" width="10.2" height="20.4" viewBox="0 0 256 512"><path d="M31.700 239l136-136c9.400-9.400 24.600-9.400 33.900 0l22.600 22.600c9.400 9.400 9.400 24.600 0 33.900L127.900 256l96.400 96.400c9.400 9.400 9.400 24.600 0 33.900L201.700 409c-9.400 9.400-24.600 9.400-33.900 0l-136-136c-9.500-9.400-9.500-24.600-.1-34z" fill="#c8c2d6"/></svg>
<svg style="left:33.2px;top:993.3px;" width="18.6" height="21.3" viewBox="0 0 448 512"><path d="M12 192h424c6.600 0 12 5.400 12 12v260c0 26.500-21.500 48-48 48H48c-26.500 0-48-21.500-48-48V204c0-6.600 5.400-12 12-12zm436-44v-36c0-26.500-21.500-48-48-48h-48V12c0-6.600-5.400-12-12-12h-40c-6.600 0-12 5.400-12 12v52H160V12c0-6.600-5.400-12-12-12h-40c-6.600 0-12 5.400-12 12v52H48C21.500 64 0 85.500 0 112v36c0 6.600 5.400 12 12 12h424c6.600 0 12-5.400 12-12z" fill="#c8c2d6"/></svg>
<span class="t" style="left:64.7px;top:998px;font-size:17.01px;font-weight:400;color:#c8c2d6;transform:scaleX(0.9506);">Cuti</span>
<svg style="left:245.2px;top:993.9px;" width="10.2" height="20.4" viewBox="0 0 256 512"><path d="M31.700 239l136-136c9.400-9.400 24.600-9.400 33.900 0l22.600 22.600c9.400 9.400 9.400 24.600 0 33.900L127.900 256l96.400 96.400c9.400 9.400 9.400 24.600 0 33.900L201.700 409c-9.400 9.400-24.600 9.400-33.900 0l-136-136c-9.500-9.400-9.500-24.600-.1-34z" fill="#c8c2d6"/></svg>
</div>
<div class="g" id="browser-chrome">
<div style="left:0px;top:0px;width:1920px;height:50px;background:#e5e5e5;"></div>
<div style="left:0px;top:50px;width:1920px;height:57px;background:#e8e8e8;"></div>
<div style="left:0px;top:107px;width:1920px;height:43px;background:#e6e6e6;"></div>
<div style="left:0px;top:149.5px;width:1920px;height:1.5px;background:#cfcfcf;"></div>
<svg style="left:16px;top:15px;" width="20" height="20" viewBox="0 0 20 20"><path d="M5.5 7.5l4.5 4.5 4.5-4.5" fill="none" stroke="#1f1f1f" stroke-width="2" stroke-linecap="round" stroke-linejoin="round"/></svg>
<div style="left:50px;top:7px;width:258px;height:35px;background:#d3d3d3;border-radius:10px;"></div>
<div style="left:316px;top:7px;width:259px;height:35px;background:#d3d3d3;border-radius:10px;"></div>
<div style="left:583px;top:7px;width:257.5px;height:35px;background:#d3d3d3;border-radius:10px;"></div>
<div style="left:849px;top:7px;width:258px;height:35px;background:#d3d3d3;border-radius:10px;"></div>
<div style="left:1381px;top:7px;width:257px;height:35px;background:#d3d3d3;border-radius:10px;"></div>
<div style="left:1115px;top:7px;width:258px;height:43px;background:#e8e8e8;border-radius:10px 10px 0 0;"></div>
<svg style="left:1105px;top:40px;" width="10" height="10" viewBox="0 0 10 10"><path d="M10 0v10H0A10 10 0 0 0 10 0z" fill="#e8e8e8"/></svg>
<svg style="left:1373px;top:40px;" width="10" height="10" viewBox="0 0 10 10"><path d="M0 0v10h10A10 10 0 0 1 0 0z" fill="#e8e8e8"/></svg>
<span class="t" style="left:90.5px;top:19px;font-size:14.8px;font-weight:400;color:#1f1f1f;transform:scaleX(0.9944);">Selamat Datang Di Aplikasi</span>
<div style="left:244px;top:10px;width:26px;height:28px;background:linear-gradient(90deg,rgba(211,211,211,0),#d3d3d3 85%);"></div>
<span class="t" style="left:355.21px;top:19px;font-size:14.8px;font-weight:400;color:#1f1f1f;transform:scaleX(0.9947);">Inbox - ata.adonia@gmail.c</span>
<div style="left:510px;top:10px;width:26px;height:28px;background:linear-gradient(90deg,rgba(211,211,211,0),#d3d3d3 85%);"></div>
<span class="t" style="left:623px;top:19px;font-size:14.8px;font-weight:400;color:#1f1f1f;transform:scaleX(0.9886);">Google Finance - Stock Ma</span>
<div style="left:776px;top:10px;width:26px;height:28px;background:linear-gradient(90deg,rgba(211,211,211,0),#d3d3d3 85%);"></div>
<span class="t" style="left:889.2px;top:19px;font-size:14.8px;font-weight:400;color:#1f1f1f;transform:scaleX(0.9073);">(7) RESMI RILIS iOS 26 (</span>
<div style="left:1017px;top:10px;width:26px;height:28px;background:linear-gradient(90deg,rgba(211,211,211,0),#d3d3d3 85%);"></div>
<span class="t" style="left:1154.55px;top:19px;font-size:14.8px;font-weight:400;color:#1f1f1f;transform:scaleX(0.9549);">Beranda</span>
<span class="t" style="left:1420.23px;top:19px;font-size:14.8px;font-weight:400;color:#1f1f1f;transform:scaleX(0.9729);">Revisi tampilan SIPADU</span>
<svg style="left:280.7px;top:17px;" width="16" height="16" viewBox="-8 -8 16 16"><path d="M-4.6 -4.6L4.6 4.6M4.6 -4.6L-4.6 4.6" stroke="#1f1f1f" stroke-width="2" stroke-linecap="butt" fill="none"/></svg>
<svg style="left:547px;top:17px;" width="16" height="16" viewBox="-8 -8 16 16"><path d="M-4.6 -4.6L4.6 4.6M4.6 -4.6L-4.6 4.6" stroke="#1f1f1f" stroke-width="2" stroke-linecap="butt" fill="none"/></svg>
<svg style="left:813.2px;top:17px;" width="16" height="16" viewBox="-8 -8 16 16"><path d="M-4.6 -4.6L4.6 4.6M4.6 -4.6L-4.6 4.6" stroke="#1f1f1f" stroke-width="2" stroke-linecap="butt" fill="none"/></svg>
<svg style="left:1079.5px;top:17px;" width="16" height="16" viewBox="-8 -8 16 16"><path d="M-4.6 -4.6L4.6 4.6M4.6 -4.6L-4.6 4.6" stroke="#1f1f1f" stroke-width="2" stroke-linecap="butt" fill="none"/></svg>
<svg style="left:1345.7px;top:17px;" width="16" height="16" viewBox="-8 -8 16 16"><path d="M-4.6 -4.6L4.6 4.6M4.6 -4.6L-4.6 4.6" stroke="#1f1f1f" stroke-width="2" stroke-linecap="butt" fill="none"/></svg>
<svg style="left:1610.7px;top:17px;" width="16" height="16" viewBox="-8 -8 16 16"><path d="M-4.6 -4.6L4.6 4.6M4.6 -4.6L-4.6 4.6" stroke="#1f1f1f" stroke-width="2" stroke-linecap="butt" fill="none"/></svg>
<svg style="left:60px;top:15px;" width="20" height="20" viewBox="0 0 20 20"><rect width="20" height="20" rx="3" fill="#fb7a24"/><g transform="translate(10 10) scale(1.22) translate(-10 -10)"><path d="M4.5 6.2c1.6-2 4-1 5.5.6 1.500-1.600 3.900-2.600 5.500-.6 1.300 1.700.300 3-.800 3.800 1.100.800 2.100 2.100.800 3.800-1.600 2-4 1-5.500-.600-1.500 1.600-3.900 2.600-5.500.600C3.200 12.100 4.200 10.800 5.300 10 4.200 9.200 3.200 7.900 4.500 6.200z" fill="#fff"/><path d="M7 7.300l2 2.700-2 2.700M13 7.300l-2 2.700 2 2.700" stroke="#fb7a24" stroke-width="1.500" fill="none" stroke-linecap="round"/></g></svg>
<svg style="left:326px;top:17px;" width="20" height="16" viewBox="0 0 20 16"><path d="M0 2.500V15h4V6.500z" fill="#4285f4"/><path d="M20 2.500V15h-4V6.500z" fill="#34a853"/><path d="M0 2.500C0 .700 2.100-.300 3.600.800L10 5.700 16.400.800C17.900-.300 20 .700 20 2.500L16 6.500 10 11 4 6.500z" fill="#ea4335"/><path d="M0 2.500l4 4V3.200L3.600.800C2.100-.300 0 .700 0 2.500z" fill="#c5221f"/><path d="M20 2.500l-4 4V3.200l.400-2.400C17.900-.300 20 .700 20 2.500z" fill="#fbbc04"/></svg>
<svg style="left:593.5px;top:15px;" width="20" height="20" viewBox="0 0 20 20"><rect x="1" y="9" width="4.500" height="9" fill="#ea4335"/><rect x="5.500" y="5" width="4.500" height="13" fill="#fbbc04"/><rect x="10" y="1.500" width="4.500" height="16.500" fill="#34a853"/><path d="M1 18l5.500-5 3.500 2.500 6.500-6.500" stroke="#4285f4" stroke-width="2.600" fill="none" stroke-linejoin="miter"/><path d="M13 8h6v6z" fill="#4285f4"/></svg>
<svg style="left:859px;top:18px;" width="20" height="14" viewBox="0 0 20 14"><rect width="20" height="14" rx="4" fill="#ff0033"/><path d="M8 4l5 3-5 3z" fill="#fff"/></svg>
<svg style="left:1049px;top:16px;" width="18" height="18" viewBox="0 0 18 18"><path d="M2 6.800h3l3.800-3.300v11L5 11.200H2z" fill="none" stroke="#1f1f1f" stroke-width="1.600" stroke-linejoin="round"/><path d="M11.300 6.300a3.600 3.600 0 0 1 0 5.400M13.200 3.800a7 7 0 0 1 0 10.400" fill="none" stroke="#1f1f1f" stroke-width="1.600" stroke-linecap="round"/></svg>
<svg style="left:1125px;top:15px;" width="20" height="20" viewBox="-10 -10 20 20"><circle r="10" fill="#fff"/><path d="M2.600-5.700a2.900 2.900 0 1 0 .900 3.600M-2.200-1.300a2.900 2.900 0 1 0-.900-3.600" stroke="#5656e4" stroke-width="1.350" fill="none" stroke-linecap="round"/><rect x="-6.800" y="2.700" width="13.600" height="1.900" rx=".4" fill="#2c3fb4"/><rect x="-5.500" y="5.400" width="11" height=".7" fill="#aab4e6"/></svg>
<svg style="left:1391.2px;top:15px;" width="20" height="20" viewBox="-10 -10 20 20"><ellipse rx="3.700" ry="6" cx="0" cy="-2.600" transform="rotate(0)" fill="none" stroke="#1f1f1f" stroke-width="1.350"/><ellipse rx="3.700" ry="6" cx="0" cy="-2.600" transform="rotate(60)" fill="none" stroke="#1f1f1f" stroke-width="1.350"/><ellipse rx="3.700" ry="6" cx="0" cy="-2.600" transform="rotate(120)" fill="none" stroke="#1f1f1f" stroke-width="1.350"/><ellipse rx="3.700" ry="6" cx="0" cy="-2.600" transform="rotate(180)" fill="none" stroke="#1f1f1f" stroke-width="1.350"/><ellipse rx="3.700" ry="6" cx="0" cy="-2.600" transform="rotate(240)" fill="none" stroke="#1f1f1f" stroke-width="1.350"/><ellipse rx="3.700" ry="6" cx="0" cy="-2.600" transform="rotate(300)" fill="none" stroke="#1f1f1f" stroke-width="1.350"/></svg>
<div style="left:1646px;top:7.5px;width:34.6px;height:34.6px;background:#d3d3d3;border-radius:50%;"></div>
<svg style="left:1655.5px;top:17px;" width="16" height="16" viewBox="-8 -8 16 16"><path d="M-6 0H6M0-6V6" stroke="#1f1f1f" stroke-width="2" fill="none"/></svg>
<svg style="left:1770px;top:17px;" width="14" height="14" viewBox="0 0 14 14"><path d="M0 7h13.500" stroke="#1f1f1f" stroke-width="1.200"/></svg>
<svg style="left:1826px;top:17px;" width="14" height="14" viewBox="0 0 14 14"><rect x=".6" y="3" width="10" height="10.400" rx="1.500" fill="none" stroke="#1f1f1f" stroke-width="1.200"/><path d="M3.200 3V2.200A1.600 1.600 0 0 1 4.800.600H11.500A1.900 1.900 0 0 1 13.400 2.500V9.500A1.400 1.400 0 0 1 12 10.900H10.800" fill="none" stroke="#1f1f1f" stroke-width="1.200"/></svg>
<svg style="left:1884px;top:17.5px;" width="14" height="14" viewBox="0 0 14 14"><path d="M.5.500l13 13M13.500.500l-13 13" stroke="#1f1f1f" stroke-width="1.200"/></svg>
<svg style="left:19.5px;top:70.7px;" width="16" height="16" viewBox="0 0 16 16"><path d="M15.500 8H1.500M7.800 1.500L1.300 8l6.500 6.500" fill="none" stroke="#555555" stroke-width="1.900" stroke-linejoin="miter"/></svg>
<svg style="left:64px;top:70.7px;" width="16" height="16" viewBox="0 0 16 16"><path d="M15.500 8H1.500M7.800 1.500L1.300 8l6.500 6.500" fill="none" stroke="#a8a8a8" stroke-width="1.900" stroke-linejoin="miter" transform="translate(16 0) scale(-1 1)"/></svg>
<svg style="left:109.5px;top:70.5px;" width="17" height="17" viewBox="0 0 17 17"><path d="M14.300 5.500A6.500 6.500 0 1 0 15 8.500" fill="none" stroke="#555555" stroke-width="1.900"/><path d="M15.500 1v5.500H10z" fill="#555555"/></svg>
<svg style="left:154px;top:69.5px;" width="17" height="18" viewBox="0 0 17 18"><path d="M1.500 7.800L8.500 2l7 5.800V16.500h-4.600V11H6.100v5.500H1.500z" fill="none" stroke="#555555" stroke-width="1.900" stroke-linejoin="round"/></svg>
<div style="left:195px;top:58px;width:1462px;height:41.5px;background:#c9c9c9;border-radius:20.750px;"></div>
<div style="left:201px;top:64.5px;width:29px;height:29px;background:#e6e6e6;border-radius:50%;"></div>
<svg style="left:207px;top:70.5px;" width="17" height="17" viewBox="0 0 17 17"><circle cx="8.500" cy="8.500" r="7" fill="none" stroke="#1f1f1f" stroke-width="1.600"/><path d="M8.500 7.600v4.600" stroke="#1f1f1f" stroke-width="1.700"/><circle cx="8.500" cy="5.200" r="1.050" fill="#1f1f1f"/></svg>
<span class="t" style="left:240.72px;top:72px;font-size:17.3px;font-weight:400;color:#1f1f1f;transform:scaleX(0.9836);">localhost</span>
<span class="t" style="left:308px;top:72px;font-size:17.3px;font-weight:400;color:#5a5a5a;transform:scaleX(1.0645);">/sipadu/admin/index</span>
<svg style="left:1578px;top:70px;" width="19" height="19" viewBox="0 0 19 19"><circle cx="7.500" cy="7.500" r="5.600" fill="none" stroke="#555555" stroke-width="1.700"/><path d="M11.700 11.700l5.800 5.800" stroke="#555555" stroke-width="1.900"/><path d="M5 7.500h5" stroke="#555555" stroke-width="1.500"/></svg>
<svg style="left:1617.5px;top:69.5px;" width="19" height="19" viewBox="0 0 19 19"><path d="M9.500 1.800l2.350 5.250 5.700.550-4.300 3.800 1.250 5.600-5-2.950-5 2.950 1.250-5.600-4.300-3.800 5.700-.550z" fill="none" stroke="#555555" stroke-width="1.650" stroke-linejoin="miter"/></svg>
<svg style="left:1680.2px;top:67.3px;" width="23" height="21" viewBox="0 0 23 21"><path d="M3 3.500H8.200a2 2 0 0 1 4 0H17.300a1.500 1.500 0 0 1 1.500 1.500V9.700a2 2 0 0 1 0 4V18.700a1.500 1.500 0 0 1-1.500 1.500H3a1.500 1.500 0 0 1-1.500-1.500V13.900a2.200 2.200 0 0 0 0-4.400V5A1.500 1.500 0 0 1 3 3.500z" fill="none" stroke="#555555" stroke-width="1.900" stroke-linejoin="round"/></svg>
<div style="left:1722.3px;top:68.7px;width:2px;height:19.5px;background:#cdcdcd;"></div>
<svg style="left:1747.5px;top:69.5px;" width="20" height="20" viewBox="0 0 20 20"><path d="M10 1.500v11M4.800 7.800l5.200 5.200 5.200-5.200" fill="none" stroke="#555555" stroke-width="1.900"/><path d="M1.500 13.500v3.300a1.200 1.200 0 0 0 1.200 1.200h14.600a1.200 1.200 0 0 0 1.200-1.200v-3.300" fill="none" stroke="#555555" stroke-width="1.900"/></svg>
<svg style="left:1793px;top:69.5px;" width="20" height="18" viewBox="0 0 20 18"><path d="M.5 2.500h11M.5 6.700h11M.5 10.900h6.500" stroke="#555555" stroke-width="1.700"/><path d="M15 2v10.500" stroke="#555555" stroke-width="1.700"/><path d="M15 2.200h4.500" stroke="#555555" stroke-width="2"/><circle cx="12.800" cy="12.800" r="2.700" fill="#555555"/></svg>
<svg style="left:1835px;top:66px;" width="25" height="25" viewBox="-10 -10 20 20"><circle r="10" fill="#fff"/><path d="M2.600-5.700a2.900 2.900 0 1 0 .900 3.600M-2.200-1.300a2.900 2.900 0 1 0-.900-3.600" stroke="#5656e4" stroke-width="1.350" fill="none" stroke-linecap="round"/><rect x="-6.800" y="2.700" width="13.600" height="1.900" rx=".4" fill="#2c3fb4"/><rect x="-5.500" y="5.400" width="11" height=".7" fill="#aab4e6"/></svg>
<svg style="left:1889.5px;top:69px;" width="5" height="20" viewBox="0 0 5 20"><circle cx="2.500" cy="2.500" r="1.700" fill="#555555"/><circle cx="2.500" cy="9.700" r="1.700" fill="#555555"/><circle cx="2.500" cy="16.900" r="1.700" fill="#555555"/></svg>
<svg style="left:15.5px;top:117px;" width="18" height="18" viewBox="0 0 18 18"><rect x="0.75" y="0.75" width="5.600" height="5.600" fill="none" stroke="#555555" stroke-width="1.500"/><rect x="0.75" y="11" width="5.600" height="5.600" fill="none" stroke="#555555" stroke-width="1.500"/><rect x="11" y="0.75" width="5.600" height="5.600" fill="none" stroke="#555555" stroke-width="1.500"/><rect x="11" y="11" width="5.600" height="5.600" fill="none" stroke="#555555" stroke-width="1.500"/></svg>
<div style="left:52.8px;top:115.5px;width:2px;height:19px;background:#cdcdcd;"></div>
<svg style="left:75.5px;top:118px;" width="20" height="15" viewBox="0 0 20 15"><path d="M1 2.200A1.200 1.200 0 0 1 2.200 1H7.300l2 2.200h8.500A1.200 1.200 0 0 1 19 4.400v8.400A1.200 1.200 0 0 1 17.800 14H2.200A1.200 1.200 0 0 1 1 12.800z" fill="none" stroke="#555555" stroke-width="1.600" stroke-linejoin="round"/></svg>
<span class="t" style="left:104.45px;top:118px;font-size:14.8px;font-weight:400;color:#1f1f1f;transform:scaleX(1.0537);">Mine</span>
<svg style="left:162px;top:118px;" width="20" height="15" viewBox="0 0 20 15"><path d="M1 2.200A1.200 1.200 0 0 1 2.200 1H7.300l2 2.200h8.500A1.200 1.200 0 0 1 19 4.400v8.400A1.200 1.200 0 0 1 17.800 14H2.200A1.200 1.200 0 0 1 1 12.800z" fill="none" stroke="#555555" stroke-width="1.600" stroke-linejoin="round"/></svg>
<span class="t" style="left:191.03px;top:118px;font-size:14.8px;font-weight:400;color:#1f1f1f;transform:scaleX(0.9681);">Local</span>
<svg style="left:249px;top:118px;" width="20" height="15" viewBox="0 0 20 15"><path d="M1 2.200A1.200 1.200 0 0 1 2.200 1H7.300l2 2.200h8.500A1.200 1.200 0 0 1 19 4.400v8.400A1.200 1.200 0 0 1 17.800 14H2.200A1.200 1.200 0 0 1 1 12.800z" fill="none" stroke="#555555" stroke-width="1.600" stroke-linejoin="round"/></svg>
<span class="t" style="left:279px;top:118px;font-size:14.8px;font-weight:400;color:#1f1f1f;transform:scaleX(0.9940);">Google</span>
<svg style="left:350px;top:118px;" width="20" height="15" viewBox="0 0 20 15"><path d="M1 2.200A1.200 1.200 0 0 1 2.200 1H7.300l2 2.200h8.500A1.200 1.200 0 0 1 19 4.400v8.400A1.200 1.200 0 0 1 17.800 14H2.200A1.200 1.200 0 0 1 1 12.800z" fill="none" stroke="#555555" stroke-width="1.600" stroke-linejoin="round"/></svg>
<span class="t" style="left:379.01px;top:118px;font-size:14.8px;font-weight:400;color:#1f1f1f;transform:scaleX(0.9875);">E-Banking</span>
<svg style="left:470.5px;top:118px;" width="20" height="15" viewBox="0 0 20 15"><path d="M1 2.200A1.200 1.200 0 0 1 2.200 1H7.300l2 2.200h8.500A1.200 1.200 0 0 1 19 4.400v8.400A1.200 1.200 0 0 1 17.800 14H2.200A1.200 1.200 0 0 1 1 12.800z" fill="none" stroke="#555555" stroke-width="1.600" stroke-linejoin="round"/></svg>
<span class="t" style="left:499.48px;top:118px;font-size:14.8px;font-weight:400;color:#1f1f1f;transform:scaleX(1.0219);">Programming</span>
<svg style="left:614.2px;top:118px;" width="20" height="15" viewBox="0 0 20 15"><path d="M1 2.200A1.200 1.200 0 0 1 2.200 1H7.300l2 2.200h8.500A1.200 1.200 0 0 1 19 4.400v8.400A1.200 1.200 0 0 1 17.800 14H2.200A1.200 1.200 0 0 1 1 12.800z" fill="none" stroke="#555555" stroke-width="1.600" stroke-linejoin="round"/></svg>
<span class="t" style="left:644.2px;top:118px;font-size:14.8px;font-weight:400;color:#1f1f1f;transform:scaleX(0.9678);">Trading</span>
<svg style="left:716.7px;top:118px;" width="20" height="15" viewBox="0 0 20 15"><path d="M1 2.200A1.200 1.200 0 0 1 2.200 1H7.300l2 2.200h8.500A1.200 1.200 0 0 1 19 4.400v8.400A1.200 1.200 0 0 1 17.800 14H2.200A1.200 1.200 0 0 1 1 12.800z" fill="none" stroke="#555555" stroke-width="1.600" stroke-linejoin="round"/></svg>
<span class="t" style="left:746.7px;top:118px;font-size:14.8px;font-weight:400;color:#1f1f1f;transform:scaleX(0.9372);">Social</span>
<svg style="left:808px;top:118px;" width="20" height="15" viewBox="0 0 20 15"><path d="M1 2.200A1.200 1.200 0 0 1 2.200 1H7.300l2 2.200h8.500A1.200 1.200 0 0 1 19 4.400v8.400A1.200 1.200 0 0 1 17.800 14H2.200A1.200 1.200 0 0 1 1 12.800z" fill="none" stroke="#555555" stroke-width="1.600" stroke-linejoin="round"/></svg>
<span class="t" style="left:836.94px;top:118px;font-size:14.8px;font-weight:400;color:#1f1f1f;transform:scaleX(1.0641);">Mail</span>
<svg style="left:889.2px;top:118px;" width="20" height="15" viewBox="0 0 20 15"><path d="M1 2.200A1.200 1.200 0 0 1 2.200 1H7.300l2 2.200h8.500A1.200 1.200 0 0 1 19 4.400v8.400A1.200 1.200 0 0 1 17.800 14H2.200A1.200 1.200 0 0 1 1 12.800z" fill="none" stroke="#555555" stroke-width="1.600" stroke-linejoin="round"/></svg>
<span class="t" style="left:918.16px;top:118px;font-size:14.8px;font-weight:400;color:#1f1f1f;transform:scaleX(1.0380);">Hosting</span>
<svg style="left:994.2px;top:118px;" width="20" height="15" viewBox="0 0 20 15"><path d="M1 2.200A1.200 1.200 0 0 1 2.200 1H7.300l2 2.200h8.500A1.200 1.200 0 0 1 19 4.400v8.400A1.200 1.200 0 0 1 17.800 14H2.200A1.200 1.200 0 0 1 1 12.800z" fill="none" stroke="#555555" stroke-width="1.600" stroke-linejoin="round"/></svg>
<span class="t" style="left:1023.22px;top:118px;font-size:14.8px;font-weight:400;color:#1f1f1f;transform:scaleX(0.9819);">Ecommerce</span>
<svg style="left:1124.2px;top:118px;" width="20" height="15" viewBox="0 0 20 15"><path d="M1 2.200A1.200 1.200 0 0 1 2.200 1H7.300l2 2.200h8.500A1.200 1.200 0 0 1 19 4.400v8.400A1.200 1.200 0 0 1 17.800 14H2.200A1.200 1.200 0 0 1 1 12.800z" fill="none" stroke="#555555" stroke-width="1.600" stroke-linejoin="round"/></svg>
<span class="t" style="left:1154.2px;top:118px;font-size:14.8px;font-weight:400;color:#1f1f1f;transform:scaleX(0.9602);">Asuransi</span>
<svg style="left:1233px;top:118px;" width="20" height="15" viewBox="0 0 20 15"><path d="M1 2.200A1.200 1.200 0 0 1 2.200 1H7.300l2 2.200h8.500A1.200 1.200 0 0 1 19 4.400v8.400A1.200 1.200 0 0 1 17.800 14H2.200A1.200 1.200 0 0 1 1 12.800z" fill="none" stroke="#555555" stroke-width="1.600" stroke-linejoin="round"/></svg>
<span class="t" style="left:1262.05px;top:118px;font-size:14.8px;font-weight:400;color:#1f1f1f;transform:scaleX(0.9483);">Recehan</span>
<svg style="left:1342px;top:118px;" width="20" height="15" viewBox="0 0 20 15"><path d="M1 2.200A1.200 1.200 0 0 1 2.200 1H7.300l2 2.200h8.500A1.200 1.200 0 0 1 19 4.400v8.400A1.200 1.200 0 0 1 17.800 14H2.200A1.200 1.200 0 0 1 1 12.800z" fill="none" stroke="#555555" stroke-width="1.600" stroke-linejoin="round"/></svg>
<span class="t" style="left:1371.02px;top:118px;font-size:14.8px;font-weight:400;color:#1f1f1f;transform:scaleX(0.9831);">News</span>
<svg style="left:1431.7px;top:118px;" width="20" height="15" viewBox="0 0 20 15"><path d="M1 2.200A1.200 1.200 0 0 1 2.200 1H7.300l2 2.200h8.500A1.200 1.200 0 0 1 19 4.400v8.400A1.200 1.200 0 0 1 17.800 14H2.200A1.200 1.200 0 0 1 1 12.800z" fill="none" stroke="#555555" stroke-width="1.600" stroke-linejoin="round"/></svg>
<span class="t" style="left:1461.7px;top:118px;font-size:14.8px;font-weight:400;color:#1f1f1f;transform:scaleX(0.9886);">Software</span>
<svg style="left:1543px;top:118px;" width="20" height="15" viewBox="0 0 20 15"><path d="M1 2.200A1.200 1.200 0 0 1 2.200 1H7.300l2 2.200h8.500A1.200 1.200 0 0 1 19 4.400v8.400A1.200 1.200 0 0 1 17.800 14H2.200A1.200 1.200 0 0 1 1 12.800z" fill="none" stroke="#555555" stroke-width="1.600" stroke-linejoin="round"/></svg>
<span class="t" style="left:1573px;top:118px;font-size:14.8px;font-weight:400;color:#1f1f1f;transform:scaleX(0.9958);">All Website</span>
</div>
<div class="g" id="os-taskbar">
<div style="left:0px;top:1030px;width:1920px;height:50px;background:#1b183f;"></div>
<svg style="left:20px;top:1044.5px;" width="20" height="20.5" viewBox="0 0 20 20.500"><path d="M0 3l8.200-1.200v8H0zM9.400 1.600L20 0v9.800H9.400zM0 11h8.200v8L0 17.800zM9.400 11H20v9.500L9.400 19z" fill="#fff"/></svg>
<div style="left:60px;top:1030px;width:360px;height:50px;background:#f2f2f2;border-top:1px solid #d9d9d9;"></div>
<svg style="left:75px;top:1045px;" width="20" height="20" viewBox="0 0 20 20"><circle cx="12.300" cy="7.700" r="6.400" fill="none" stroke="#1f1f1f" stroke-width="1.500"/><path d="M7.700 12.300L.8 19.200" stroke="#1f1f1f" stroke-width="1.600"/></svg>
<span class="t" style="left:110.7px;top:1046px;font-size:18.3px;font-weight:400;color:#2b2b2b;transform:scaleX(1.0130);">Type here to search</span>
<div style="left:320px;top:1030.5px;width:100px;height:49.500px;overflow:hidden"><svg style="left:0;top:0" width="100" height="49.500" viewBox="320 1030.500 100 49.500"><defs><radialGradient id="gl" cx="50%" cy="50%" r="50%"><stop offset="0" stop-color="#082a46"/><stop offset="88%" stop-color="#082a46"/><stop offset="92.500%" stop-color="#4d8fc4"/><stop offset="96.500%" stop-color="#c0dcf0"/><stop offset="100%" stop-color="#f2f2f2" stop-opacity="0"/></radialGradient><radialGradient id="ge" cx="68%" cy="72%" r="78%"><stop offset="0" stop-color="#072743"/><stop offset="58%" stop-color="#08345c"/><stop offset="80%" stop-color="#0d6fcc"/><stop offset="100%" stop-color="#25a4fa"/></radialGradient><radialGradient id="gy" cx="50%" cy="50%" r="50%"><stop offset="0" stop-color="#ffd34a" stop-opacity=".95"/><stop offset="100%" stop-color="#ffd34a" stop-opacity="0"/></radialGradient></defs><circle cx="376.600" cy="1093.700" r="63.500" fill="url(#gl)"/><circle cx="376.600" cy="1093.700" r="50.800" fill="url(#ge)"/><path d="M343.800 1057.100l7.200-4.800 14.600.4 7.300 1.500 3.700-1.900 10.900 1.100 4.400-2.100 8 2.400-5.800 6.300-.7 2.200-5.900 5.800 3.700 6-11-5.600-10.200 2.600-1.400 9h-21.900l-5.900-13z" fill="#7f8463"/><path d="M368.600 1080l1.400-9 10.200-2.600 7.300-.400" fill="none" stroke="#d8d4a8" stroke-width="1.100"/><circle cx="363" cy="1058.800" r="6" fill="url(#gy)"/><circle cx="347" cy="1066" r="6" fill="url(#gy)"/><circle cx="388" cy="1061" r="7" fill="url(#gy)"/><circle cx="367" cy="1072" r="6" fill="url(#gy)"/><g fill="#fff6d8"><ellipse cx="387.800" cy="1057" rx="2.300" ry="1.500"/><ellipse cx="382.500" cy="1064" rx="1.900" ry="1.300"/><ellipse cx="345" cy="1069.500" rx="2.300" ry="1.600"/><ellipse cx="355.500" cy="1066.800" rx="1.600" ry="1.300"/><ellipse cx="351" cy="1063" rx="1.600" ry="1.100"/><ellipse cx="368" cy="1062.300" rx="1.300" ry="1.200"/><ellipse cx="358.500" cy="1059.300" rx="1.500" ry="1"/><ellipse cx="365" cy="1071.800" rx="1.800" ry="1.200"/><ellipse cx="355.500" cy="1071" rx="1.400" ry="1.100"/><ellipse cx="368.300" cy="1068.500" rx="1.400" ry=".9"/><ellipse cx="342.500" cy="1067" rx="1.200" ry="1"/></g></svg></div>
<svg style="left:440px;top:1045px;" width="21" height="19" viewBox="0 0 21 19"><path d="M0 .7h13.500M0 18.300h13.500" stroke="#fff" stroke-width="1.400"/><rect x="1.700" y="4.200" width="11" height="10.600" fill="none" stroke="#fff" stroke-width="1.400"/><path d="M18.300 0v4M18.300 6.700v12.300" stroke="#fff" stroke-width="1.500"/><path d="M16.300 9h4" stroke="#fff" stroke-width="1.500"/></svg>
<div style="left:488.7px;top:1077px;width:51.3px;height:3px;background:#76b9ed;"></div>
<div style="left:550.7px;top:1077px;width:51.3px;height:3px;background:#76b9ed;"></div>
<div style="left:612.5px;top:1077px;width:51.2px;height:3px;background:#76b9ed;"></div>
<div style="left:798.7px;top:1077px;width:51.3px;height:3px;background:#76b9ed;"></div>
<div style="left:922.8px;top:1077px;width:51.4px;height:3px;background:#76b9ed;"></div>
<div style="left:984.7px;top:1077px;width:51.3px;height:3px;background:#76b9ed;"></div>
<div style="left:1046.9px;top:1077px;width:51.4px;height:3px;background:#76b9ed;"></div>
<div style="left:1108.8px;top:1077px;width:51.4px;height:3px;background:#76b9ed;"></div>
<div style="left:856px;top:1030px;width:61px;height:50px;background:#4b496a;"></div>
<div style="left:856px;top:1077px;width:61px;height:3px;background:#76b9ed;"></div>
<svg style="left:498.5px;top:1039.5px;" width="31" height="31" viewBox="0 0 31 31"><path d="M15.800 1.800A13.300 13.300 0 0 0 4.300 21.800L2 29.200l7.700-2A13.300 13.300 0 1 0 15.800 1.800z" fill="none" stroke="#25d366" stroke-width="2.800" stroke-linejoin="round"/><path d="M11.400 8.200c-.5-1-1-.9-1.500-.9-1.300 0-2.500 1.500-2.500 3.300 0 4.300 6.100 10.400 10.900 10.400 1.700 0 3.300-1.100 3.500-2.400.1-.6.100-1-.2-1.200l-3-1.500c-.5-.2-.8 0-1.100.4l-1 1.300c-.3.300-.6.300-1 .2-2-.8-3.700-2.400-4.700-4.400-.2-.4-.1-.7.200-1l.9-1.100c.3-.4.300-.7.200-1z" fill="#25d366"/></svg>
<svg style="left:561.5px;top:1042px;" width="29" height="24.5" viewBox="0 0 29 24.500"><path d="M1 2.500A1.500 1.500 0 0 1 2.500 1h8l2 2.500H27A1 1 0 0 1 28 4.500V8H1z" fill="#e8a92a"/><rect x="1" y="5.500" width="27" height="18" rx="1.200" fill="#fbd053"/><path d="M6 23.500v-8.200a1 1 0 0 1 1-1h15a1 1 0 0 1 1 1v8.200h-4.500v-5h-8v5z" fill="#3f8ee0"/></svg>
<svg style="left:622px;top:1042.5px;" width="32" height="24" viewBox="0 0 32 24"><path d="M1 11.800L6 6.800l6.500 6.500L8 18.500z" fill="#2564cf"/><path d="M8 18.500l5.200 4.800L31 5.500 26 .5z" fill="#3a96f0"/></svg>
<svg style="left:642px;top:1053.5px;" width="22" height="22" viewBox="0 0 22 22"><circle cx="11" cy="11" r="9.800" fill="#2b2b33" stroke="#d8d8d8" stroke-width="1.300"/></svg>
<span class="t" style="left:650.3px;top:1057px;font-size:15px;font-weight:700;color:#fff;transform:scaleX(0.7000);">1</span>
<svg style="left:685px;top:1040px;" width="30" height="30" viewBox="0 0 30 30"><defs><linearGradient id="kg" x1="0" y1="0" x2="0" y2="1"><stop offset="0" stop-color="#f0b050"/><stop offset="1" stop-color="#c98519"/></linearGradient></defs><rect x=".7" y=".7" width="28.600" height="28.600" rx="5" fill="url(#kg)" stroke="#fff3dc" stroke-width="1.500"/><circle cx="19" cy="11" r="4.200" fill="none" stroke="#fff" stroke-width="2"/><path d="M16 14L8 22M10.300 19.700l2.600 2.600M13 17l2.200 2.200" stroke="#fff" stroke-width="2" fill="none"/></svg>
<svg style="left:750.3px;top:1043.2px;" width="22.8" height="22.8" viewBox="0 0 22.800 22.800"><rect width="22.800" height="22.800" fill="#ffe600"/><path d="M11.600 11.900H21.900L11.600 22.200z" fill="#15143f"/></svg>
<svg style="left:808.7px;top:1040px;" width="30" height="30" viewBox="0 0 30 30"><defs><linearGradient id="sg" x1="0" y1="0" x2="0" y2="1"><stop offset="0" stop-color="#a4e2ff"/><stop offset=".55" stop-color="#4fb4fb"/><stop offset="1" stop-color="#1c86fb"/></linearGradient><clipPath id="sc"><rect width="30" height="30" rx="2"/></clipPath></defs><g clip-path="url(#sc)"><rect width="30" height="30" fill="url(#sg)"/><path d="M.600 1.900L30 15.600M20.600 0L10.600 24.400" stroke="#1d2740" stroke-width="1.700"/><path d="M0 19.400L19 30H0z" fill="#3a3f4a"/></g></svg>
<span class="t" style="left:827.5px;top:1051px;font-size:18px;font-weight:700;color:#fff;transform:scaleX(0.8800);font-family:"Liberation Serif",serif;font-style:italic;">7</span>
<svg style="left:871px;top:1040px;" width="30" height="30" viewBox="-15 -15 30 30"><circle r="15" fill="#fff"/><path d="M0-15A15 15 0 0 1 13 -7.500H0A7.500 7.500 0 0 0 -6.500 -3.750L-13-7.500A15 15 0 0 1 0-15z" fill="#ea4335"/><path d="M13-7.500A15 15 0 0 1 0 15L6.500 3.750A7.500 7.500 0 0 0 6.500 -3.750 7.500 7.500 0 0 0 0-7.500z" fill="#fbbc04"/><path d="M0 15A15 15 0 0 1 -13-7.500L-6.500 3.750A7.500 7.500 0 0 0 6.500 3.750z" fill="#34a853"/><circle r="6.800" fill="#fff"/><circle r="5.400" fill="#4285f4"/></svg>
<svg style="left:933px;top:1041px;" width="30" height="28" viewBox="0 0 30 28"><rect x="12" y="3" width="17" height="22" rx="1" fill="#fff" stroke="#1e7145" stroke-width="1.600"/><path d="M17 3v22M23 3v22M12 8.500h17M12 14h17M12 19.500h17" stroke="#1e7145" stroke-width="1.200"/><path d="M0 3.200L17 0v28L0 24.800z" fill="#1e7145"/><path d="M5 8.500l7 11M12 8.500l-7 11" stroke="#fff" stroke-width="2.400"/></svg>
<svg style="left:995px;top:1040.5px;" width="29" height="29" viewBox="-14.500 -14.500 29 29"><circle r="14.500" fill="#8236c2"/><circle r="11" fill="#ece5f4"/><path d="M0-8.500c-4.800 0-8.600 3.800-8.600 8.600 0 3.800 2.500 7 5.900 8.100v-2.700c-2.300.5-2.900-1-2.900-1-.4-1-1-1.300-1-1.300-.8-.5.100-.5.100-.5.900.1 1.300.9 1.300.9.800 1.300 2 .9 2.500.7.100-.6.300-.9.500-1.200-1.900-.2-3.900-.9-3.900-4.200 0-.9.300-1.700.9-2.300-.1-.2-.4-1.100.1-2.300 0 0 .7-.2 2.400.9.700-.2 1.400-.3 2.200-.3s1.500.1 2.200.3c1.600-1.100 2.400-.9 2.400-.9.500 1.200.2 2.100.1 2.300.5.600.9 1.400.9 2.300 0 3.300-2 4-3.900 4.200.3.300.6.800.6 1.600v3.500c3.400-1.100 5.900-4.300 5.900-8.100C8.600-4.700 4.800-8.500 0-8.500z" fill="#8236c2"/></svg>
<svg style="left:1057px;top:1041px;" width="30" height="28" viewBox="0 0 30 28"><rect x="12" y="3" width="14" height="22" fill="#fff" stroke="#80397b" stroke-width="1.600"/><path d="M16 8h7M16 12h7M16 16h7M16 20h7" stroke="#80397b" stroke-width="1.600"/><path d="M26 5h3.500v4H26zM26 10.500h3.500v4H26zM26 16h3.500v4H26z" fill="#fff" stroke="#80397b" stroke-width=".8"/><path d="M0 3.200L17 0v28L0 24.800z" fill="#80397b"/><path d="M4.800 19.500v-11l7.400 11v-11" fill="none" stroke="#fff" stroke-width="2.400"/></svg>
<svg style="left:1119px;top:1040px;" width="31" height="31" viewBox="0 0 31 31"><defs><linearGradient id="ng" x1="0" y1="0" x2="1" y2="1"><stop offset="0" stop-color="#e8f6fb"/><stop offset="1" stop-color="#7fc0dc"/></linearGradient></defs><path d="M11 2.500l17 2.500-4 24-21-5z" fill="url(#ng)" stroke="#9ab8c6" stroke-width=".8"/><path d="M24 29l4-24 1.500.500-3.500 23z" fill="#d9b056"/><path d="M11.500 2l16 2.300" stroke="#555" stroke-width="1.600" stroke-dasharray="1.200 1.200"/></svg>
<svg style="left:1462px;top:1037px;" width="33" height="33" viewBox="0 0 33 33"><circle cx="20" cy="14" r="7" fill="#f7a030"/><path d="M7.500 31.500a6 6 0 0 1-.5-12 8 8 0 0 1 15-1.500 6.800 6.800 0 0 1 2 13.500z" fill="#dfe8f5"/><path d="M7.500 31.500a6 6 0 0 1-3-1c6 1 16 1 23-3a6.800 6.800 0 0 1-3.500 4z" fill="#9fbbe6"/><circle cx="23.500" cy="9.500" r="7" fill="#d93025"/></svg>
<span class="t" style="left:1483.2px;top:1042px;font-size:11.5px;font-weight:400;color:#fff;transform:scaleX(0.8333);">1</span>
<span class="t" style="left:1503.2px;top:1047px;font-size:18.3px;font-weight:400;color:#fff;transform:scaleX(0.9054);">27°C</span>
<span class="t" style="left:1550.75px;top:1047px;font-size:18.3px;font-weight:400;color:#fff;transform:scaleX(0.9502);">Berawan</span>
<svg style="left:1648.5px;top:1049.5px;" width="17" height="11" viewBox="0 0 17 11"><path d="M.8 10L8.500 2l7.700 8" fill="none" stroke="#fff" stroke-width="1.500"/></svg>
<svg style="left:1680px;top:1046px;" width="17" height="22" viewBox="0 0 17 22"><rect x="1" y="5.500" width="9.500" height="10" rx="2" fill="none" stroke="#fff" stroke-width="1.300"/><path d="M10.500 9.500l4.500-2.500v7.500l-4.500-2.500" fill="none" stroke="#fff" stroke-width="1.300" stroke-linejoin="round"/><path d="M2 3c2-2.500 6-3 9-1.200M2 18.500c2 2.500 6 3 9 1.200" fill="none" stroke="#fff" stroke-width="1.100"/></svg>
<svg style="left:1707px;top:1046.5px;" width="21" height="19" viewBox="0 0 21 19"><rect x="2.800" y="1" width="17.500" height="12" fill="none" stroke="#fff" stroke-width="1.300"/><path d="M11.500 13v4.500M7.500 17.800h8" stroke="#fff" stroke-width="1.300"/><rect x=".6" y=".6" width="3.600" height="4.200" fill="#1b183f" stroke="#fff" stroke-width="1"/><path d="M2.400 5v13" stroke="#fff" stroke-width="1.100"/></svg>
<svg style="left:1737px;top:1046.5px;" width="21" height="19" viewBox="0 0 21 19"><path d="M.8 6.800h3.400L8.800 2.200v14.600L4.200 12.200H.8z" fill="none" stroke="#fff" stroke-width="1.300" stroke-linejoin="round"/><path d="M11.300 7a3.600 3.600 0 0 1 0 5M13.800 4.600a7 7 0 0 1 0 9.800" fill="none" stroke="#fff" stroke-width="1.200"/><path d="M16.500 2.200a10.500 10.500 0 0 1 0 14.600" fill="none" stroke="#8d8ca0" stroke-width="1.200"/></svg>
<span class="t" style="left:1794.5px;top:1036px;font-size:15px;font-weight:400;color:#fff;transform:scaleX(0.9011);">7:12</span>
<span class="t" style="left:1770.2px;top:1059px;font-size:15px;font-weight:400;color:#fff;transform:scaleX(1.0009);">16/09/2025</span>
<svg style="left:1868.5px;top:1044.5px;" width="21" height="19" viewBox="0 0 21 19"><path d="M0 0h21v14.500h-4.500V19l-4.500-4.500H0z" fill="#fff"/><path d="M3.500 4h14M3.500 7.200h14M3.500 10.400h14" stroke="#1b183f" stroke-width="1.100"/></svg>
<svg style="left:1878px;top:1054px;" width="21" height="21" viewBox="0 0 21 21"><circle cx="10.500" cy="10.500" r="9.800" fill="#3a3a42" stroke="#77778a" stroke-width="1"/></svg>
<span class="t" style="left:1884.7px;top:1058px;font-size:14px;font-weight:700;color:#fff;transform:scaleX(0.9375);">7</span>
<div style="left:1914px;top:1030px;width:1px;height:50px;background:#6a6980;"></div>
</div>
</body></html>
